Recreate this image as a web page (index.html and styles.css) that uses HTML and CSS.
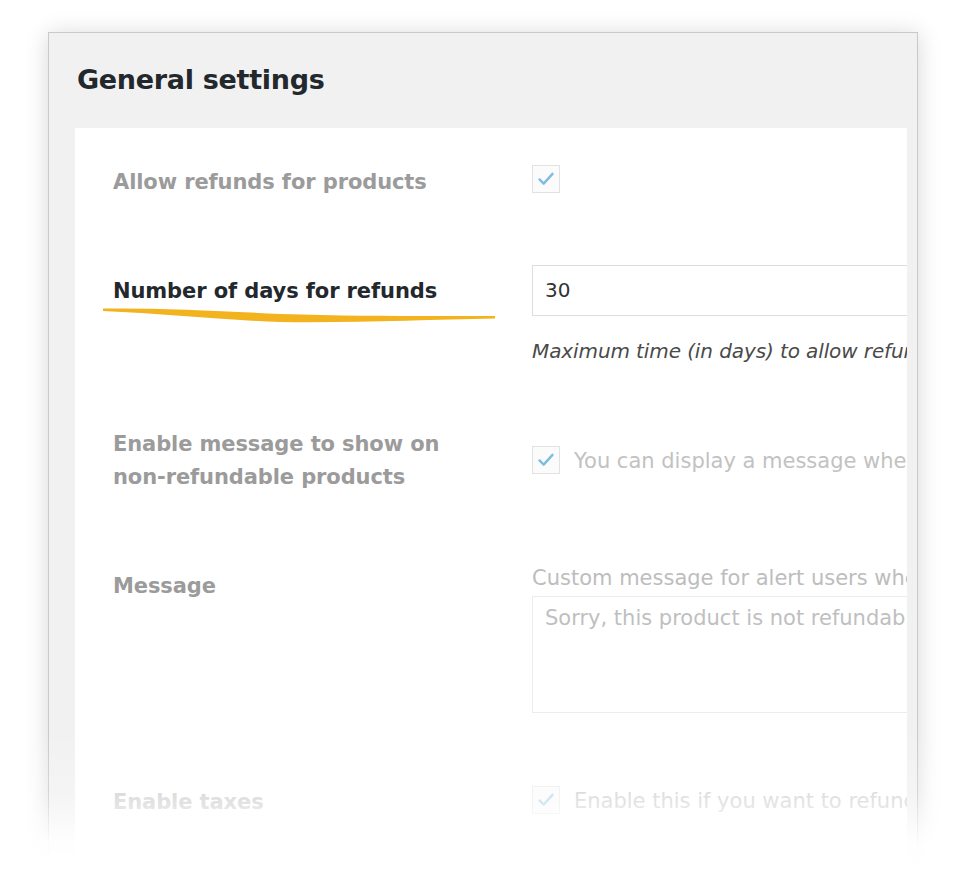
FILE: index.html
```html
<!DOCTYPE html>
<html>
<head>
<meta charset="utf-8">
<link rel="stylesheet" href="styles.css">
</head>
<body>
<div class="stage">
  <div class="panel">
    <h2 class="title">General settings</h2>
    <div class="content">
      <div class="row row1">
        <div class="label muted">Allow refunds for products</div>
        <div class="control">
          <span class="check"><svg viewBox="0 0 28 28"><path d="M7 14.5 L11.5 19 L21 8.5" /></svg></span>
        </div>
      </div>
      <div class="row row2">
        <div class="label focus">Number of days for refunds
          <svg class="brush" viewBox="0 0 400 20" preserveAspectRatio="none"><path d="M0 2.5 C60 2 120 5 180 8 C260 10.5 330 10 398 10 L398 12.5 C330 13.5 260 17 180 16 C120 14 60 7.5 0 5 Z"/></svg>
        </div>
        <div class="control">
          <div class="input">30</div>
          <div class="desc">Maximum time (in days) to allow refunds on products</div>
        </div>
      </div>
      <div class="row row3">
        <div class="label muted two">Enable message to show on<br>non-refundable products</div>
        <div class="control">
          <div class="checkline"><span class="check"><svg viewBox="0 0 28 28"><path d="M7 14.5 L11.5 19 L21 8.5" /></svg></span><span class="faint">You can display a message when product is not refundable</span></div>
        </div>
      </div>
      <div class="row row4">
        <div class="label muted">Message</div>
        <div class="control">
          <div class="hint">Custom message for alert users when a product is not refundable</div>
          <div class="textarea">Sorry, this product is not refundable</div>
        </div>
      </div>
      <div class="row row5">
        <div class="label ghost">Enable taxes</div>
        <div class="control">
          <div class="checkline"><span class="check"><svg viewBox="0 0 28 28"><path d="M7 14.5 L11.5 19 L21 8.5" /></svg></span><span class="ghost-text">Enable this if you want to refund taxes too</span></div>
        </div>
      </div>
    </div>
  </div>
  <div class="fade"></div>
</div>
</body>
</html>
```
FILE: styles.css
```css
html, body {
  margin: 0;
  padding: 0;
  background: #ffffff;
}
body {
  width: 960px;
  height: 873px;
  overflow: hidden;
  font-family: "DejaVu Sans", "Noto Sans", sans-serif;
}
.stage {
  position: relative;
  width: 960px;
  height: 873px;
  padding-top: 32px;
  box-sizing: border-box;
}
.panel {
  margin-left: 48px;
  width: 870px;
  height: 840px;
  box-sizing: border-box;
  border: 1px solid #c9c9c9;
  background: #f1f1f1;
  box-shadow: 0 2px 22px rgba(0,0,0,0.16);
  overflow: hidden;
}
.title {
  margin: 0;
  padding: 30px 0 0 28px;
  height: 65px;
  font-size: 27px;
  font-weight: 700;
  color: #23282d;
  line-height: 34px;
  letter-spacing: -0.3px;
}
.content {
  margin-left: 26px;
  margin-right: 10px;
  background: #ffffff;
  height: 760px;
  padding-left: 38px;
  overflow: hidden;
  display: flex;
  flex-direction: column;
}
.row {
  display: grid;
  grid-template-columns: 419px 1fr;
  align-items: start;
}
.control {
  overflow: hidden;
  white-space: nowrap;
}
.label {
  position: relative;
  font-size: 21px;
  font-weight: 700;
  line-height: 30px;
  letter-spacing: -0.1px;
}
.muted { color: #9b9b9b; }
.focus { color: #23282d; }
.ghost { color: #d2d2d2; }
.two { line-height: 33px; }

.row1 { margin-top: 37px; }
.row1 .label { margin-top: 2px; }

.row2 { margin-top: 68px; }
.row2 .label { margin-top: 11px; }

.row3 { margin-top: 62px; }
.row3 .control { padding-top: 15px; }

.row4 { margin-top: 69px; }
.row4 .label { margin-top: 8px; }

.row5 { margin-top: 70px; }
.row5 .label { margin-top: 4px; }

.check {
  display: inline-flex;
  align-items: center;
  justify-content: center;
  width: 28px;
  height: 28px;
  box-sizing: border-box;
  border: 1px solid #e2e2e2;
  background: #fbfbfb;
  flex: none;
}
.check svg {
  width: 28px;
  height: 28px;
}
.check path {
  fill: none;
  stroke: #7fbde0;
  stroke-width: 2.6;
  stroke-linecap: round;
  stroke-linejoin: round;
}
.row5 .check { border-color: #eeeeee; }
.row5 .check path { stroke: #bcdcf0; }

.checkline {
  display: flex;
  align-items: center;
  gap: 14px;
}
.faint {
  font-size: 21px;
  color: #c2c2c2;
  line-height: 30px;
  margin-top: 3px;
}
.ghost-text {
  font-size: 21px;
  color: #d4d4d4;
  line-height: 30px;
  margin-top: 3px;
}
.input {
  height: 51px;
  box-sizing: border-box;
  border: 1px solid #dddddd;
  border-right: none;
  padding-left: 12px;
  font-size: 20px;
  line-height: 49px;
  color: #333333;
}
.desc {
  margin-top: 20px;
  font-size: 20px;
  font-style: italic;
  line-height: 30px;
  color: #4a4a4a;
  letter-spacing: -0.1px;
}
.hint {
  font-size: 21px;
  line-height: 30px;
  color: #bdbdbd;
}
.textarea {
  margin-top: 3px;
  height: 117px;
  box-sizing: border-box;
  border: 1px solid #ececec;
  border-right: none;
  padding: 6px 12px;
  font-size: 21px;
  line-height: 30px;
  color: #bfbfbf;
}
.brush {
  position: absolute;
  left: -10px;
  top: 30px;
  width: 394px;
  height: 20px;
}
.brush path {
  fill: #f2b31e;
}
.fade {
  position: absolute;
  left: 0;
  right: 0;
  top: 730px;
  bottom: 0;
  background: linear-gradient(to bottom, rgba(255,255,255,0) 0%, rgba(255,255,255,0.25) 45%, rgba(255,255,255,0.95) 80%, #ffffff 100%);
  pointer-events: none;
}
```
